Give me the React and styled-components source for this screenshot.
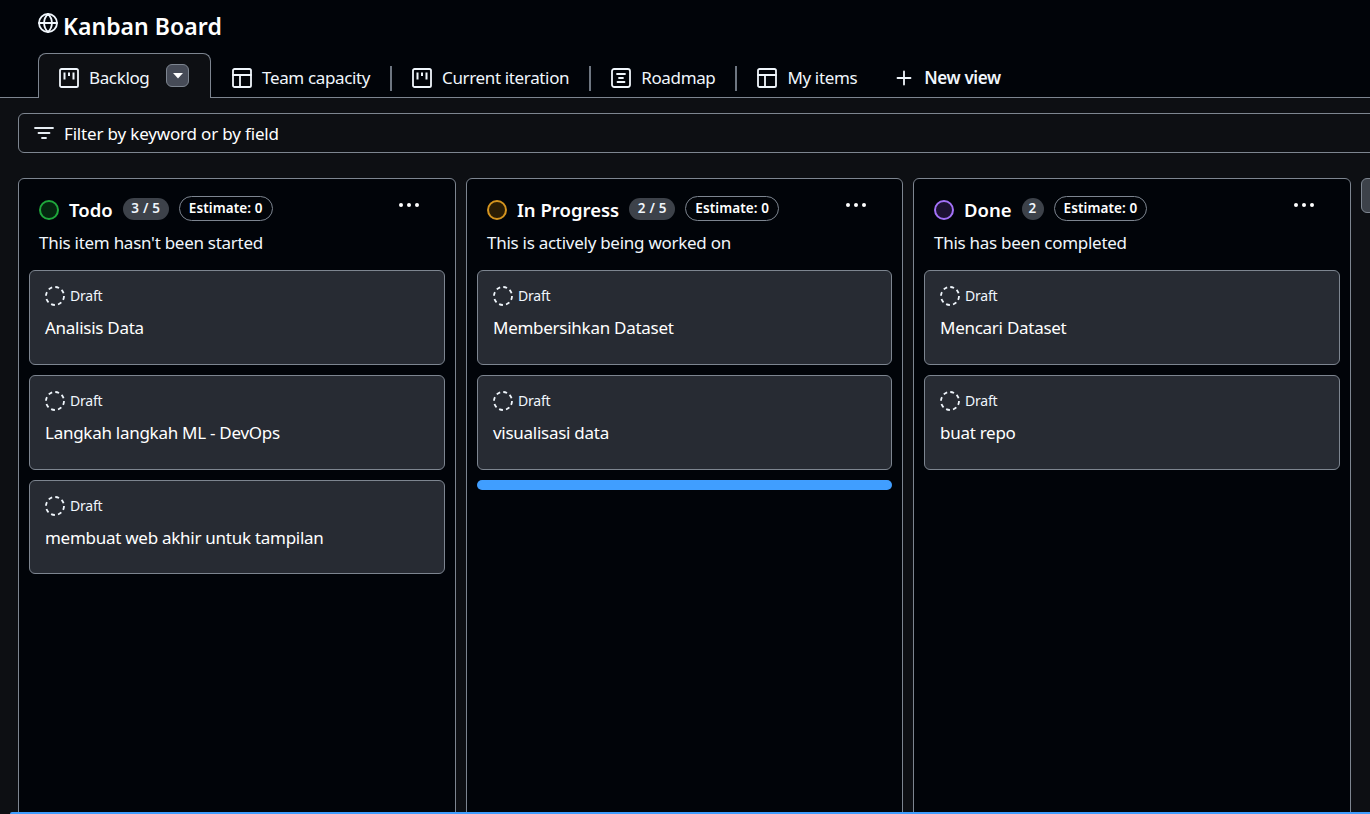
import React from 'react';
import styled, { createGlobalStyle } from 'styled-components';

const Global = createGlobalStyle`
  html, body { margin: 0; padding: 0; height: 100%; background: #0d0f13; overflow: hidden; }
  #root { height: 100%; }
  * { box-sizing: border-box; }
`;
const FONT = `"Noto Sans", "Open Sans", sans-serif`;

const Page = styled.div`
  position: relative; height: 814px; width: 1370px; overflow: hidden;
  display: flex; flex-direction: column; background: #0d0f13; color: #fff;
  font-family: ${FONT};
`;
const Header = styled.header`
  height: 98px; background: #010409; border-bottom: 1px solid #7d8590;
  display: flex; flex-direction: column; padding-left: 38px;
`;
const TitleRow = styled.div`
  height: 53px; display: flex; align-items: flex-start; gap: 5px; padding-top: 13px;
`;
const Title = styled.h1`
  margin: 0; font-size: 23px; line-height: 27px; font-weight: 600; letter-spacing: 0.05px;
`;
const Tabs = styled.nav`
  display: flex; height: 45px; align-items: flex-start;
`;
const ActiveTab = styled.div`
  width: 173px; height: 45px; margin-bottom: -1px; display: flex; align-items: center;
  background: #0d0f13; border: 1px solid #7d8590; border-bottom: none;
  border-radius: 8px 8px 0 0; padding: 5px 0 0 20px; z-index: 1;
`;
const Tab = styled.div`
  height: 25px; margin-top: 13px; display: flex; align-items: center;
  padding: 0 ${p => p.$pr}px 0 ${p => p.$pl}px;
  border-right: ${p => (p.$sep ? '2px solid #6e7681' : 'none')};
`;
const TabLabel = styled.span`
  font-size: 17px; line-height: 24px; margin-left: ${p => p.$ml || 10}px;
  letter-spacing: -0.36px; color: #f0f6fc; white-space: nowrap;
  font-weight: ${p => (p.$bold ? 600 : 400)};
`;
const Caret = styled.button`
  width: 23px; height: 23px; margin-left: 17px; margin-top: -5px; padding: 0; background: #464b57;
  border: 1px solid #7d8590; border-radius: 6px; display: flex; align-items: center; justify-content: center;
`;
const Filter = styled.div`
  margin: 15px 0 0 18px; width: 1400px; height: 40px; flex-shrink: 0;
  border: 1px solid #7d8590; border-radius: 6px; display: flex; align-items: center;
  padding-left: 15px; gap: 10px; font-size: 17px; letter-spacing: -0.17px;
`;
const Board = styled.main`
  margin: 25px 0 0 18px; display: flex; gap: 10px; flex: 1; min-height: 0;
`;
const Column = styled.section`
  flex: 0 0 ${p => p.$w}px; height: 660px; background: #010409; border: 1px solid #7d8590;
  border-radius: 6px; padding: 0 10px; display: flex; flex-direction: column;
`;
const ColHead = styled.div`
  height: 91px; position: relative; padding: 17px 0 0 10px; flex-shrink: 0;
`;
const HeadRow = styled.div`
  display: flex; align-items: center; height: 27px;
`;
const Status = styled.span`
  width: 20px; height: 20px; border-radius: 50%; border: 2px solid ${p => p.$c};
  background: ${p => p.$bg}; flex-shrink: 0;
`;
const ColName = styled.span`
  font-size: 18.5px; font-weight: 600; letter-spacing: 0; margin-left: 10px; line-height: 27px;
`;
const Count = styled.span`
  height: 22px; min-width: 22px; padding: 0 ${p => (p.$single ? 6 : 8.5)}px; border-radius: 11px; background: #3d424a;
  font-size: 13.5px; font-weight: 600; line-height: 21px; margin: -1px 0 0 10px;
  text-align: center; color: #f0f6fc; letter-spacing: 0.25px;
`;
const Estimate = styled.span`
  height: 25px; padding: 0 9px; border: 1px solid #7d8590; border-radius: 13px; font-size: 13.5px;
  font-weight: 600; line-height: 23px; margin: -3px 0 0 10px; letter-spacing: 0.1px; white-space: nowrap;
`;
const More = styled.span`
  position: absolute; right: 26px; top: 24px; display: flex; gap: 4px;
`;
const Dot = styled.i`
  width: 4px; height: 4px; border-radius: 50%; background: #fff; display: block;
`;
const Desc = styled.p`
  margin: 8px 0 0; font-size: 17px; line-height: 24px; letter-spacing: -0.27px; color: #f0f6fc;
`;
const Cards = styled.div`
  display: flex; flex-direction: column; gap: 10px;
`;
const Card = styled.article`
  height: ${p => p.$h || 95}px; background: #272b33; border: 1px solid #7d8590; border-radius: 6px;
  padding: 15px 15px 0;
`;
const Meta = styled.div`
  display: flex; align-items: center; gap: 5px; height: 20px; font-size: 14px; letter-spacing: -0.2px; color: #f0f6fc;
`;
const MetaLabel = styled.span`
  margin-top: -2px;
`;
const CardTitle = styled.div`
  margin-top: 10px; font-size: 17px; line-height: 24px; letter-spacing: -0.27px; color: #fff;
`;
const DropBar = styled.div`
  height: 10px; background: #409eff; border-radius: 5px; margin-top: 10px;
`;
const AddColumn = styled.div`
  flex: 0 0 60px; height: 35px; background: #3d424a; border: 1px solid #7d8590; border-radius: 6px;
`;
const BottomLine = styled.div`
  position: absolute; left: 10px; right: 0; bottom: 0; height: 2px; background: #409eff; border-radius: 2px 0 0 0;
`;

const Ico = styled.svg`
  display: block; flex-shrink: 0; fill: none; stroke: ${p => p.$c || '#f0f6fc'}; stroke-width: 1.8;
  stroke-linecap: round; stroke-linejoin: round;
`;
const BoardIcon = () => (
  <Ico width="20" height="20" viewBox="0 0 20 20">
    <rect x="1" y="1" width="18" height="18" rx="1.6" />
    <path d="M5.5 4.5v7M10 4.5v3.5M14.5 4.5v7" strokeWidth="2" strokeLinecap="butt" />
  </Ico>
);
const TableIcon = () => (
  <Ico width="20" height="20" viewBox="0 0 20 20">
    <rect x="1" y="1" width="18" height="18" rx="1.6" />
    <path d="M1 7h18M8 7v12" />
  </Ico>
);
const RoadmapIcon = () => (
  <Ico width="20" height="20" viewBox="0 0 20 20">
    <rect x="1" y="1" width="18" height="18" rx="2.2" />
    <path d="M6 6h8M8 10h4M6.5 14h7" strokeWidth="1.8" />
  </Ico>
);
const Globe = () => (
  <Ico width="20" height="20" viewBox="0 0 20 20">
    <circle cx="10" cy="10" r="9" />
    <path d="M1 10h18M10 1c-5.2 5-5.2 13 0 18M10 1c5.2 5 5.2 13 0 18" />
  </Ico>
);
const Plus = () => (
  <Ico width="16" height="16" viewBox="0 0 16 16"><path d="M8 1.5v13M1.5 8h13" /></Ico>
);
const FilterIcon = () => (
  <Ico width="20" height="14" viewBox="0 0 20 14" $c="#e6edf3"><path d="M1 2h18M4.5 7h11M8 12h4" strokeWidth="1.8" /></Ico>
);
const DraftIcon = () => (
  <Ico width="20" height="20" viewBox="0 0 20 20">
    <circle cx="10" cy="10" r="9" strokeDasharray="3.9 3.17" strokeLinecap="butt" strokeWidth="1.8" />
  </Ico>
);

const columns = [
  { w: 438, name: 'Todo', count: '3 / 5', c: '#1fa83c', bg: '#04260f', desc: "This item hasn't been started",
    cards: [['Analisis Data', 95], ['Langkah langkah ML - DevOps', 95], ['membuat web akhir untuk tampilan', 94]] },
  { w: 437, name: 'In Progress', count: '2 / 5', c: '#d4941f', bg: '#2a1d05', desc: 'This is actively being worked on',
    cards: [['Membersihkan Dataset', 95], ['visualisasi data', 95]], drop: true },
  { w: 438, name: 'Done', count: '2', single: true, c: '#a371f7', bg: '#1d1233', desc: 'This has been completed',
    cards: [['Mencari Dataset', 95], ['buat repo', 95]] },
];

const tabs = [
  { icon: <TableIcon />, label: 'Team capacity', pl: 21, pr: 20, sep: true },
  { icon: <BoardIcon />, label: 'Current iteration', pl: 20, pr: 20, sep: true },
  { icon: <RoadmapIcon />, label: 'Roadmap', pl: 20, pr: 20, sep: true },
  { icon: <TableIcon />, label: 'My items', pl: 20, pr: 39 },
];

export default function App() {
  return (
    <Page>
      <Global />
      <Header>
        <TitleRow><Globe /><Title>Kanban Board</Title></TitleRow>
        <Tabs>
          <ActiveTab>
            <BoardIcon />
            <TabLabel>Backlog</TabLabel>
            <Caret aria-label="View options">
              <svg width="10" height="6" viewBox="0 0 10 6"><path d="M0 0h10L5 5.5z" fill="#fff" /></svg>
            </Caret>
          </ActiveTab>
          {tabs.map(t => (
            <Tab key={t.label} $pl={t.pl} $pr={t.pr} $sep={t.sep}>
              {t.icon}<TabLabel>{t.label}</TabLabel>
            </Tab>
          ))}
          <Tab $pl={0} $pr={0}><Plus /><TabLabel $ml={12} $bold>New view</TabLabel></Tab>
        </Tabs>
      </Header>
      <Filter><FilterIcon />Filter by keyword or by field</Filter>
      <Board>
        {columns.map(col => (
          <Column key={col.name} $w={col.w}>
            <ColHead>
              <HeadRow>
                <Status $c={col.c} $bg={col.bg} />
                <ColName>{col.name}</ColName>
                <Count $single={col.single}>{col.count}</Count>
                <Estimate>Estimate: 0</Estimate>
              </HeadRow>
              <More><Dot /><Dot /><Dot /></More>
              <Desc>{col.desc}</Desc>
            </ColHead>
            <Cards>
              {col.cards.map(([title, h]) => (
                <Card key={title} $h={h}>
                  <Meta><DraftIcon /><MetaLabel>Draft</MetaLabel></Meta>
                  <CardTitle>{title}</CardTitle>
                </Card>
              ))}
            </Cards>
            {col.drop && <DropBar />}
          </Column>
        ))}
        <AddColumn />
      </Board>
      <BottomLine />
    </Page>
  );
}
